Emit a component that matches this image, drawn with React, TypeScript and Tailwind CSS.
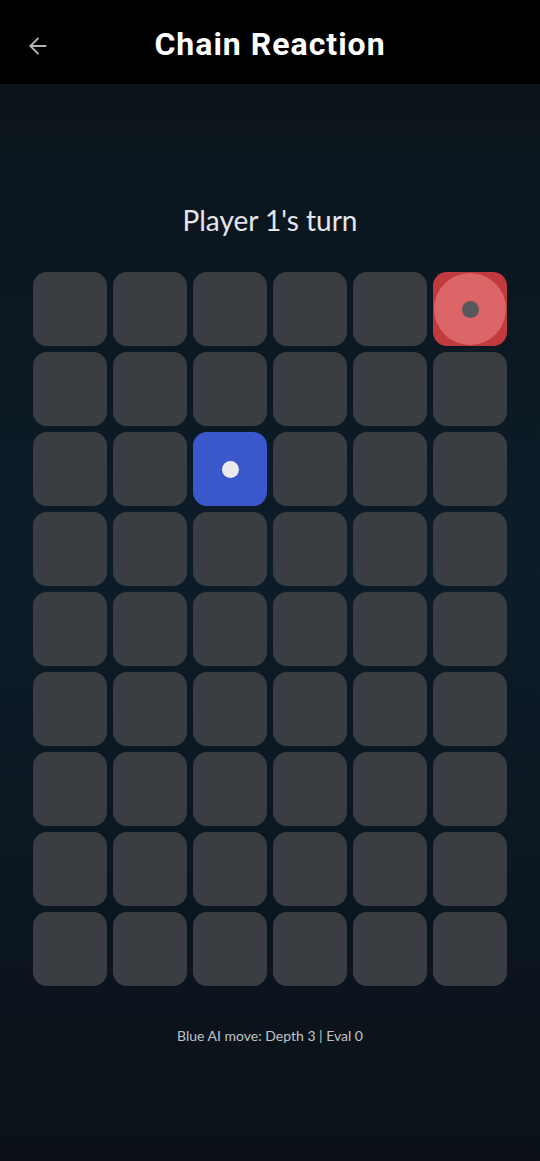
import { ArrowLeft } from "lucide-react";

const ROWS = 9;
const COLS = 6;

type Cell = { owner: "red" | "blue" | null; count: number };

const board: Cell[][] = Array.from({ length: ROWS }, (_, r) =>
	Array.from({ length: COLS }, (_, c) => {
		if (r === 0 && c === 5) return { owner: "red", count: 1 } as Cell;
		if (r === 2 && c === 2) return { owner: "blue", count: 1 } as Cell;
		return { owner: null, count: 0 } as Cell;
	})
);

const Tile = ({ cell }: { cell: Cell }) => {
	if (cell.owner === "red") {
		return (
			<div className="relative flex h-[74px] w-[74px] items-center justify-center overflow-hidden rounded-[14px] bg-[#c13b3e]">
				<div className="absolute h-[72px] w-[72px] rounded-full bg-[#db6567]" />
				<div className="relative h-[17px] w-[17px] rounded-full bg-[#56585b]" />
			</div>
		);
	}
	if (cell.owner === "blue") {
		return (
			<div className="flex h-[74px] w-[74px] items-center justify-center rounded-[14px] bg-[#3a58cc]">
				<div className="h-[17px] w-[17px] rounded-full bg-[#ebebee]" />
			</div>
		);
	}
	return <div className="h-[74px] w-[74px] rounded-[14px] bg-[#3a3d41]" />;
};

export default function App() {
	return (
		<div className="flex h-[1161px] w-[540px] flex-col overflow-hidden bg-black">
			<div className="relative flex h-[84px] shrink-0 items-center justify-center bg-black">
				<ArrowLeft className="absolute left-[25px] top-[33px] h-[26px] w-[26px] text-[#b5b5b5]" strokeWidth={1.75} />
				<h1 className="mt-[4px] font-['Roboto',sans-serif] text-[32px] font-bold tracking-[1px] text-white">
					Chain Reaction
				</h1>
			</div>
			<div className="flex flex-1 flex-col items-center bg-[linear-gradient(180deg,#0b141b_0%,#0c1c28_45%,#0b1620_75%,#0b1117_100%)] font-['Lato',sans-serif]">
				<p className="mt-[117px] text-[28px] leading-[38px] text-[#e3e6ea]">Player 1's turn</p>
				<div className="mt-[33px] grid grid-cols-6 gap-[6px]">
					{board.flat().map((cell, i) => (
						<Tile key={i} cell={cell} />
					))}
				</div>
				<p className="mt-[39px] text-[14px] text-[#c0c4c8]">Blue AI move: Depth 3 | Eval 0</p>
			</div>
		</div>
	);
}
